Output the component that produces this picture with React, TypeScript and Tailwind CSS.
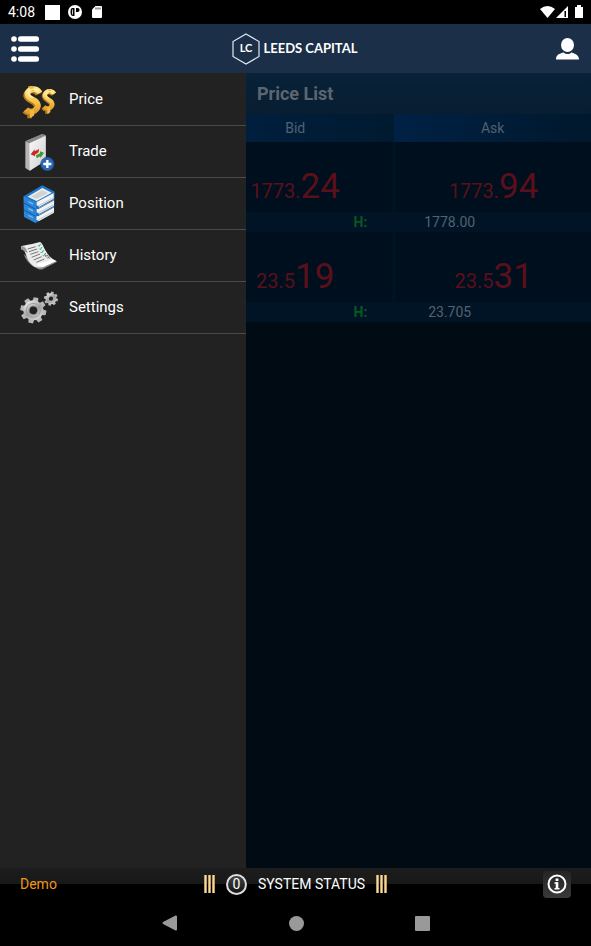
import type { ReactNode } from "react";

type Quote = {
  id: string;
  bid: [string, string];
  ask: [string, string];
  high: string;
};

const quotes: Quote[] = [
  { id: "gold", bid: ["1773.", "24"], ask: ["1773.", "94"], high: "1778.00" },
  { id: "silver", bid: ["23.5", "19"], ask: ["23.5", "31"], high: "23.705" },
];

function PriceIcon() {
  const big = "M62 39C57 27 42 24 32 31C19 41 27 52 40 58C56 65 62 77 52 88C43 97 28 96 21 88";
  const small = "M106 41C101 33 90 31 82 37C74 44 78 53 89 59C100 64 104 74 96 81C89 88 80 86 75 80";
  return (
    <svg viewBox="0 0 120 120" className="size-10" fill="none" aria-hidden="true">
      <defs>
        <linearGradient id="gold" x1="0" y1="0" x2="0" y2="1">
          <stop offset="0" stopColor="#ffe78c" />
          <stop offset="0.55" stopColor="#f6c64b" />
          <stop offset="1" stopColor="#e2a02c" />
        </linearGradient>
      </defs>
      <g stroke="#b97c1c">
        <path d={big} strokeWidth="17" transform="translate(-4 4)" />
        <path d={small} strokeWidth="13" transform="translate(-3 3)" />
        <path d="M34 18V34M32 94V115" strokeWidth="14" />
        <path d="M88 27V38M84 86V101" strokeWidth="11" />
      </g>
      <g stroke="url(#gold)">
        <path d={big} strokeWidth="17" />
        <path d={small} strokeWidth="13" />
      </g>
      <path d="M33 17L45 21V34H33ZM33 90H45V107L33 113Z" fill="#f0bb42" />
      <path d="M88 27L97 29V38H88ZM85 82H94V97L85 102Z" fill="#f0bb42" />
      <path d="M57 33C49 26 38 26 31 32C23 40 30 48 41 53" stroke="#fff3b8" strokeWidth="4" />
      <path d="M101 37C94 32 87 34 82 39C77 45 82 50 89 54" stroke="#fff3b8" strokeWidth="3" />
    </svg>
  );
}

function TradeIcon() {
  return (
    <svg viewBox="0 0 120 120" className="size-10" aria-hidden="true">
      <defs>
        <linearGradient id="cover" x1="0" y1="0" x2="1" y2="1">
          <stop offset="0" stopColor="#fafafa" />
          <stop offset="1" stopColor="#cfcfcf" />
        </linearGradient>
      </defs>
      <path d="M19 28L70 6L80 10V84L32 116L19 108Z" fill="#b5b5b5" />
      <path d="M19 28L70 6L78 11L31 34Z" fill="#686868" />
      <path d="M24 28L72 8M28 31L76 11" stroke="#c9c9c9" strokeWidth="1.5" />
      <path d="M31 34L80 12V86L32 116Z" fill="url(#cover)" />
      <path d="M35 67L47 52V58L60 51L59 61L48 68V73Z" fill="#cf2424" />
      <path d="M51 70L63 64V58L75 62L64 79V73L53 79Z" fill="#3d9a2b" />
      <circle cx="85" cy="96" r="20" fill="#2b66b0" stroke="#1b4c86" strokeWidth="2" />
      <path d="M85 84V108M73 96H97" stroke="#fff" strokeWidth="7" />
    </svg>
  );
}

function PositionIcon() {
  return (
    <svg viewBox="0 0 120 120" className="size-10" aria-hidden="true">
      <path d="M14 37L70 4L107 23L105 86L50 117L15 98Z" fill="#1f77c9" />
      <path d="M14 37L51 56L50 117L15 98Z" fill="#2b86d8" />
      <path d="M26 38L70 12L98 26L53 51Z" fill="#f0f0f0" />
      <path d="M35 38L70 18L88 27L53 45Z" fill="#d2d2d2" />
      <path d="M53 54L104 27V44L61 68L53 64ZM53 75L105 49V65L61 89L53 85ZM53 96L105 70V86L60 111L52 107Z" fill="#f3f3f3" />
      <path d="M57 66L104 41M57 87L104 62M57 108L104 83" stroke="#c3c7cb" strokeWidth="3" />
      <path d="M53 68L62 71L60 76L53 74ZM53 89L62 92L60 97L53 95Z" fill="#1870c0" />
      <path d="M62 72L105 48M62 93L105 69" stroke="#73889c" strokeWidth="3" />
      <path d="M15 57L50 76M15 78L50 97" stroke="#1459a1" strokeWidth="3" />
      <path d="M28 51L42 58V62L28 55ZM28 71L42 78V83L28 76ZM28 92L42 99V103L28 96Z" fill="#80b9ec" />
    </svg>
  );
}

function HistoryIcon() {
  return (
    <svg viewBox="0 0 120 120" className="size-10" fill="none" aria-hidden="true">
      <path d="M14 54C22 76 36 90 56 98C68 103 71 100 78 96L115 77L101 69L52 86Z" fill="#8d8d8d" />
      <path d="M6 31C10 28 27 28 63 18C76 24 76 57 111 75L72 93C40 101 29 78 20 54C17 44 12 37 6 40Z" fill="#ececec" />
      <path d="M6 31C17 29 23 38 26 52C14 44 9 41 6 40Z" fill="#999" />
      <path d="M68 90C56 91 50 84 58 82C72 82 90 75 99 70L112 75L72 93Z" fill="#fff" />
      <path d="M26 39L50 32M30 47L54 39M34 55L58 47M38 64L63 54M44 72L68 62M52 79L76 69" stroke="#5b5b5b" strokeWidth="2.5" />
      <path d="M57 28L60 31L65 24M61 38L64 41L69 33M65 48L68 51L74 42M71 58L74 60L80 51" stroke="#25a775" strokeWidth="3" />
      <path d="M78 61L88 56M84 67L93 62M78 55L83 65M85 57L92 69" stroke="#6d6565" strokeWidth="2" />
    </svg>
  );
}

type GearProps = { cx: number; cy: number; scale: number };

function Gear({ cx, cy, scale }: GearProps) {
  return (
    <g transform={`translate(${cx} ${cy}) scale(${scale}) rotate(12)`}>
      {[0, 45, 90, 135, 180, 225, 270, 315].map((angle) => (
        <path key={angle} d="M-9 -24L-7 -39H7L9 -24Z" fill="#b8b8b8" transform={`rotate(${angle})`} />
      ))}
      <circle r="21" fill="none" stroke="url(#steel)" strokeWidth="18" />
      <circle r="21" fill="none" stroke="#8e8e8e" strokeWidth="2" />
      <circle r="13" fill="none" stroke="#858585" strokeWidth="2" />
    </g>
  );
}

function SettingsIcon() {
  return (
    <svg viewBox="0 0 120 120" className="size-10" aria-hidden="true">
      <defs>
        <linearGradient id="steel" x1="0" y1="0" x2="1" y2="1">
          <stop offset="0" stopColor="#e4e4e4" />
          <stop offset="0.5" stopColor="#a5a5a5" />
          <stop offset="1" stopColor="#d0d0d0" />
        </linearGradient>
      </defs>
      <Gear cx={43} cy={67} scale={1} />
      <Gear cx={96} cy={32} scale={0.54} />
    </svg>
  );
}

const menuItems: { label: string; icon: ReactNode }[] = [
  { label: "Price", icon: <PriceIcon /> },
  { label: "Trade", icon: <TradeIcon /> },
  { label: "Position", icon: <PositionIcon /> },
  { label: "History", icon: <HistoryIcon /> },
  { label: "Settings", icon: <SettingsIcon /> },
];

function StatusBar() {
  return (
    <div className="flex h-6 items-center justify-between bg-black px-2 text-white">
      <div className="flex items-center gap-2">
        <span className="text-sm">4:08</span>
        <span className="ml-0.5 size-[15px] bg-white" />
        <svg viewBox="0 0 14 14" className="size-[14px]" aria-hidden="true">
          <circle cx="7" cy="7" r="7" fill="#fff" />
          <path d="M4.5 3H6.5V11H5C3.500 11 2.500 9.500 2.500 7S3 3 4.500 3Z" fill="#000" />
          <path d="M8 3H9.500C10.800 3 11.500 3.800 11.500 5S10.800 7 9.500 7H8Z" fill="#000" />
          <path d="M4.5 4.5V9.5" stroke="#fff" strokeWidth="0.8" />
        </svg>
        <svg viewBox="0 0 10 12" className="ml-0.5 h-3 w-[10px]" aria-hidden="true">
          <path d="M3.5 0H9Q10 0 10 1V11Q10 12 9 12H1Q0 12 0 11V3.5Z" fill="#fff" />
          <path d="M4 1.5V3.5M6 1.5V3.5M8 1.5V3.5" stroke="#000" strokeWidth="0.8" />
        </svg>
      </div>
      <svg viewBox="0 0 44 14" className="h-[14px] w-11" aria-hidden="true">
        <path d="M1 4Q8.500 -2 16 4L8.500 13Z" fill="#fff" />
        <path d="M17 13L29 1V13Z" fill="#fff" />
        <path d="M25.5 6H27V12H25.5Z" fill="#000" />
        <path d="M36 2H38V0H42V2H44V13H36Z" fill="#fff" />
      </svg>
    </div>
  );
}

function Header() {
  return (
    <header className="grid h-[49px] grid-cols-[1fr_auto_1fr] items-center bg-[#1b3048] pr-3 pl-[11px]">
      <button aria-label="Menu" className="justify-self-start">
        <svg viewBox="0 0 28 28" className="size-7" fill="#fff" aria-hidden="true">
          <circle cx="3" cy="4" r="2.8" />
          <circle cx="3" cy="14" r="2.8" />
          <circle cx="3" cy="24" r="2.8" />
          <rect x="7" y="1.3" width="21" height="5.4" rx="2.5" />
          <rect x="7" y="11.3" width="21" height="5.4" rx="2.5" />
          <rect x="7" y="21.3" width="21" height="5.4" rx="2.5" />
        </svg>
      </button>
      <div className="flex items-center gap-[3px] font-[Lato] font-bold text-white">
        <svg viewBox="0 0 28 32" className="h-8 w-7" aria-hidden="true">
          <path d="M14 1L27 8.5V23.5L14 31L1 23.5V8.5Z" fill="none" stroke="#e3e8ef" strokeWidth="1.2" />
          <text x="14" y="19" fill="#fff" fontSize="11" textAnchor="middle">LC</text>
        </svg>
        <span className="text-[13px]">LEEDS CAPITAL</span>
      </div>
      <button aria-label="Account" className="justify-self-end">
        <svg viewBox="0 0 24 22" className="h-[22px] w-6" fill="#fff" aria-hidden="true">
          <ellipse cx="12.500" cy="7" rx="6.500" ry="7" />
          <path d="M1 21.5C1 17.500 3 16 8.500 14.500C11 16.500 14 16.500 16.500 14.500C21 16 24 17.500 24 21.500Z" />
        </svg>
      </button>
    </header>
  );
}

function Drawer() {
  return (
    <nav className="w-[246px] shrink-0 bg-[#222] pt-px">
      {menuItems.map((item) => (
        <button
          key={item.label}
          className="flex h-[52px] w-full items-center gap-[10px] border-b border-[#4a4a4a] pl-[19px] text-left text-[15px] text-white"
        >
          {item.icon}
          {item.label}
        </button>
      ))}
    </nav>
  );
}

function PriceCell({ value, className }: { value: [string, string]; className?: string }) {
  return (
    <td className={`h-[70px] pt-5 text-center ${className ?? ""}`}>
      <span className="text-xl">{value[0]}</span>
      <span className="text-[35px] leading-10">{value[1]}</span>
    </td>
  );
}

function PriceList() {
  return (
    <main className="min-w-0 flex-1 bg-[#000b14]">
      <h1 className="bg-linear-to-b from-[#082239] to-[#081d30] pl-[11px] text-lg leading-[41px] font-bold text-[#5c6670]">
        Price List
      </h1>
      <table className="w-full table-fixed border-collapse text-sm text-[#526170]">
        <thead>
          <tr className="h-7">
            <th className="w-[43%] bg-linear-to-r from-[#001f3e] to-[#001a30] pr-[50px] font-normal">Bid</th>
            <th className="bg-linear-to-r from-[#002145] to-[#00182d] font-normal">Ask</th>
          </tr>
        </thead>
        {quotes.map((quote) => (
          <tbody key={quote.id}>
            <tr className="bg-[#000f1d] text-[#5b0f1b]">
              <PriceCell value={quote.bid} className="border-r-4 border-[#001321] pr-12" />
              <PriceCell value={quote.ask} />
            </tr>
            <tr className="h-5 bg-[#001426]">
              <td className="pr-[27px] text-right font-bold text-[#055a22]">H:</td>
              <td className="pr-[86px] text-center">{quote.high}</td>
            </tr>
          </tbody>
        ))}
      </table>
    </main>
  );
}

function StatusStripes() {
  return (
    <svg viewBox="0 0 11 20" className="h-5 w-[11px]" aria-hidden="true">
      <path d="M1.5 1V19M5.5 1V19M9.5 1V19" stroke="#b58d4d" strokeWidth="2.8" />
      <path d="M1.5 1V19M5.5 1V19M9.5 1V19" stroke="#f3d9a4" strokeWidth="1.6" />
    </svg>
  );
}

function Footer() {
  return (
    <footer className="grid h-8 grid-cols-[1fr_auto_1fr] items-center bg-linear-to-b from-[#1d1d1d] from-0% via-[#181818] via-50% to-black to-50% px-5 text-sm text-white">
      <span className="text-[#f0961b]">Demo</span>
      <div className="flex items-center gap-[11px]">
        <StatusStripes />
        <span className="flex size-[21px] items-center justify-center rounded-full border-2 border-[#ddd] bg-linear-to-b from-[#444] to-[#151515]">
          0
        </span>
        <span>SYSTEM STATUS</span>
        <StatusStripes />
      </div>
      <button
        aria-label="Information"
        className="flex h-[27px] w-7 items-center justify-center justify-self-end rounded-sm bg-linear-to-b from-[#252525] to-[#393939]"
      >
        <svg viewBox="0 0 20 20" className="size-5" fill="none" stroke="#fff" aria-hidden="true">
          <circle cx="10" cy="10" r="8.5" strokeWidth="2" />
          <path d="M10 4.5V7" strokeWidth="2.8" />
          <path d="M7.5 9H10V14.5M7.500 14.700H12.500" strokeWidth="1.6" />
          <path d="M10 8.200V15" strokeWidth="2.6" />
        </svg>
      </button>
    </footer>
  );
}

function SystemNav() {
  return (
    <div className="flex h-[46px] items-center justify-center gap-[111px] bg-black">
      <button aria-label="Back">
        <svg viewBox="0 0 16 16" className="size-4" aria-hidden="true">
          <path d="M1.5 8L14 1.5V14.5Z" fill="#999" stroke="#999" strokeWidth="2" strokeLinejoin="round" />
        </svg>
      </button>
      <button aria-label="Home" className="size-[15px] rounded-full bg-[#999]" />
      <button aria-label="Recent apps" className="size-[15px] rounded-[1px] bg-[#999]" />
    </div>
  );
}

export default function App() {
  return (
    <div className="flex min-h-screen flex-col bg-black font-[Roboto,sans-serif]">
      <StatusBar />
      <Header />
      <div className="flex flex-1">
        <Drawer />
        <PriceList />
      </div>
      <Footer />
      <SystemNav />
    </div>
  );
}
